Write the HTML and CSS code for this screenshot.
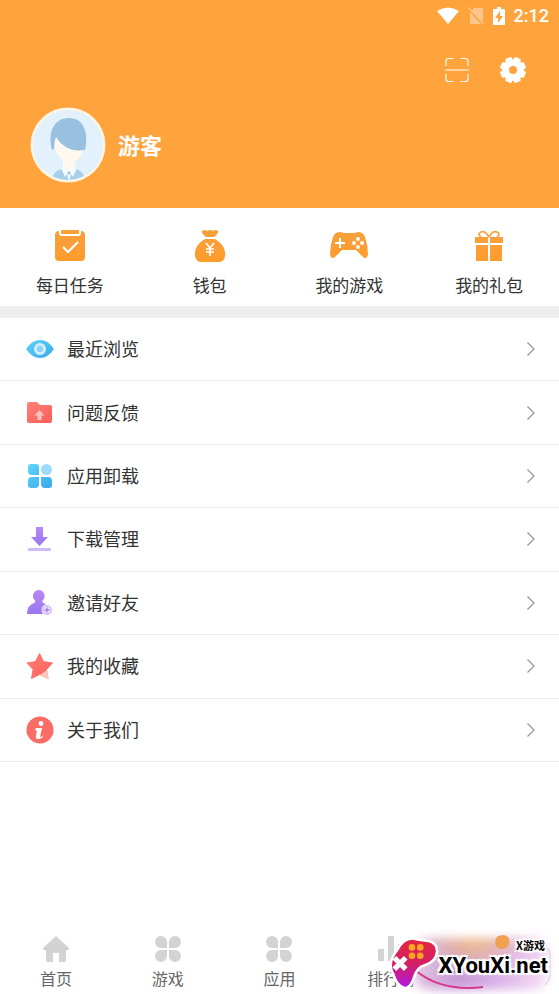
FILE: index.html
```
<!DOCTYPE html>
<html lang="zh-CN">
<head>
<meta charset="utf-8">
<meta name="viewport" content="width=device-width, initial-scale=1">
<title>我的</title>
<link rel="stylesheet" href="styles.css">
</head>
<body>
<svg width="0" height="0" class="defs" aria-hidden="true">
  <defs>
    <linearGradient id="orange" x1="0" y1="0" x2="0" y2="1"><stop offset="0" stop-color="#f7a03c"/><stop offset="1" stop-color="#ff9c2c"/></linearGradient>
    <linearGradient id="blue" x1="0" y1="0" x2="1" y2="1"><stop offset="0" stop-color="#5fd3fb"/><stop offset="1" stop-color="#3aa8ec"/></linearGradient>
    <linearGradient id="red" x1="0" y1="0" x2="1" y2="1"><stop offset="0" stop-color="#ff8078"/><stop offset="1" stop-color="#fa5f58"/></linearGradient>
    <linearGradient id="purple" x1="0" y1="0" x2="0" y2="1"><stop offset="0" stop-color="#b889f6"/><stop offset="1" stop-color="#9a76f1"/></linearGradient>
    <linearGradient id="pad" x1="0" y1="0" x2="0" y2="1"><stop offset="0" stop-color="#e22643"/><stop offset=".5" stop-color="#d51e62"/><stop offset="1" stop-color="#b01ce0"/></linearGradient>
    <clipPath id="face"><circle cx="38" cy="38" r="35"/></clipPath>
    <symbol id="chevron" viewBox="0 0 10 16"><path d="M1.500 1.500 8 8l-6.500 6.500" fill="none" stroke="#999" stroke-width="1.300"/></symbol>
    <symbol id="clover" viewBox="0 0 28 28"><path d="M7 1h0a6 6 0 0 1 6 6v6H7A6 6 0 0 1 7 1ZM21 1h0a6 6 0 0 1 0 12h-6V7a6 6 0 0 1 6-6ZM7 15h6v6a6 6 0 1 1-6-6ZM15 15h6a6 6 0 1 1-6 6Z" fill="#d3d3d3"/></symbol>
  </defs>
</svg>
<div class="app">
  <header class="hero">
    <div class="status">
      <svg width="22" height="18" viewBox="0 0 22 18"><path d="M0 4Q11-3 22 4L11 17Z" fill="#fff"/></svg>
      <svg width="16" height="18" viewBox="0 0 16 18"><path d="M6 1h9v13L4 4ZM2 5l11 12H2ZM0 1l1-1 15 16-1 1Z" fill="#ffc68c"/></svg>
      <svg width="12" height="18" viewBox="0 0 12 18"><path fill-rule="evenodd" d="M4 0h4v2h3q1 0 1 1v14q0 1-1 1H1q-1 0-1-1V3q0-1 1-1h3ZM7 4 2 11h3v5l5-7H7Z" fill="#fff"/></svg>
      <span>2:12</span>
    </div>
    <div class="tools">
      <button type="button" aria-label="扫一扫"><svg width="26" height="26" viewBox="0 0 26 26"><path d="M2 9V4q0-2.500 2.500-2.500h5M16.500 1.500h5q2.500 0 2.500 2.500v5M2 17v5q0 2.500 2.500 2.500h5M16.500 24.500h5q2.500 0 2.500-2.500v-5M1 13h24" fill="none" stroke="#fff" stroke-width="1.200"/></svg></button>
      <button type="button" aria-label="设置"><svg width="28" height="28" viewBox="0 0 28 28">
        <g fill="#fff"><rect x="10.500" y="1" width="7" height="26" rx="1.500" transform="rotate(22.500 14 14)"/><rect x="10.500" y="1" width="7" height="26" rx="1.500" transform="rotate(67.500 14 14)"/><rect x="10.500" y="1" width="7" height="26" rx="1.500" transform="rotate(112.500 14 14)"/><rect x="10.500" y="1" width="7" height="26" rx="1.500" transform="rotate(157.500 14 14)"/><circle cx="14" cy="14" r="10.800"/></g>
        <circle cx="14" cy="14" r="4" fill="#ffa43c"/></svg></button>
    </div>
    <div class="profile">
      <svg width="76" height="76" viewBox="0 0 76 76" role="img" aria-label="头像">
        <circle cx="38" cy="38" r="37.500" fill="#fff5e4"/><circle cx="38" cy="38" r="35" fill="#e2f1fc"/>
        <g clip-path="url(#face)">
          <path d="M22 74q0-9 9-12h15q9 3 9 12Z" fill="#a5cfeb"/>
          <path d="M33 48h12v14l-6 7-6-7Z" fill="#fff8ef"/>
          <path d="M25 28h29v14q-3 8-10 13-5 3-10-1-8-6-9-14Z" fill="#fff8ef"/>
          <path d="M22 43C17 24 25 11 39 11c15 0 20 15 16 32-12 2-22-2-29-13q-2 5-2 12Z" fill="#98c1df"/>
          <path d="m31 61 3-1 5 5 5-5 3 1-4 9-2-3-2 8-2-8-2 3Z" fill="#f5fafd"/>
          <circle cx="39" cy="66" r="1.500" fill="#92bfdd"/>
        </g>
      </svg>
      <h1>游客</h1>
    </div>
  </header>
  <nav class="shortcuts">
    <a href="#"><svg width="40" height="34" viewBox="0 0 40 34"><path d="M9 2v2q0 3 3 3h16q3 0 3-3V2q4 0 4 4v22q0 4-4 4H9q-4 0-4-4V6q0-4 4-4Z" fill="url(#orange)"/><rect x="11" y="1" width="18" height="4" rx="1" fill="url(#orange)"/><path d="m13 18 5 5 10-10" fill="none" stroke="#fff" stroke-width="2.200"/></svg>每日任务</a>
    <a href="#"><svg width="40" height="34" viewBox="0 0 40 34"><path d="M12 2q3-2 5 0 3-2 6 0 3-2 5 0 1 2-4 6h-8q-5-4-4-6ZM15 10h10c7 4 11 10 10 17-.500 4-3 6-7 6H12c-4 0-6-2-7-6-1-7 3-13 10-17Z" fill="url(#orange)"/><path d="m16 14 4 5 4-5M20 19v8M16 20h8M16 23h8" fill="none" stroke="#fff" stroke-width="1.700"/></svg>钱包</a>
    <a href="#"><svg width="40" height="34" viewBox="0 0 40 34"><path d="M4 8q2-5 7-5l4 1h10l4-1q5 0 7 5 3 8 3 17-1 6-5 3l-7-7H13l-7 7q-4 3-5-3 0-9 3-17Z" fill="url(#orange)"/><path d="M11 9v10M6 14h10" stroke="#fff" stroke-width="2"/><g fill="#fff"><circle cx="29" cy="10" r="1.900"/><circle cx="29" cy="18" r="1.900"/><circle cx="25" cy="14" r="1.900"/><circle cx="33" cy="14" r="1.900"/></g></svg>我的游戏</a>
    <a href="#"><svg width="40" height="34" viewBox="0 0 40 34"><path d="M6 8h13v6H6ZM21 8h13v6H21ZM7 16h12v16H7ZM21 16h12v16H21Z" fill="url(#orange)"/><path d="M20 8Q16 1 12 3t0 5M20 8q4-7 8-5t0 5" fill="none" stroke="#f9a243" stroke-width="1.800"/></svg>我的礼包</a>
  </nav>
  <main class="menu">
    <a href="#"><svg width="28" height="28" viewBox="0 0 28 28"><path d="M0 14Q6 5 14 5t14 9q-6 9-14 9T0 14Z" fill="url(#blue)"/><circle cx="14" cy="14" r="6" fill="#d6f0fd"/><circle cx="14" cy="14" r="3.300" fill="#8dd3f8"/></svg><span>最近浏览</span><svg class="arrow"><use href="#chevron"/></svg></a>
    <a href="#"><svg width="28" height="28" viewBox="0 0 28 28"><path d="M1 5q0-2 2-2h8l3 3h10q2 0 2 2v14q0 2-2 2H3q-2 0-2-2Z" fill="url(#red)"/><path d="m13.500 11 5 5.500h-3V21h-4v-4.500h-3Z" fill="#ffc1bb"/></svg><span>问题反馈</span><svg class="arrow"><use href="#chevron"/></svg></a>
    <a href="#"><svg width="28" height="28" viewBox="0 0 28 28"><path d="M5 2h5q3 0 3 3v8H6q-4 0-4-4V5q0-3 3-3ZM6 15h7v7q0 4-4 4H5q-3 0-3-3v-4q0-4 4-4ZM15 15h7q4 0 4 4v4q0 3-3 3h-4q-4 0-4-4Z" fill="url(#blue)"/><circle cx="20.500" cy="7.500" r="5.500" fill="#9ddcfb"/></svg><span>应用卸载</span><svg class="arrow"><use href="#chevron"/></svg></a>
    <a href="#"><svg width="28" height="28" viewBox="0 0 28 28"><path d="M10 2h7v10h5l-8.500 9L5 12h5Z" fill="url(#purple)"/><rect x="2" y="23" width="23" height="3" rx="1" fill="#cfb9f8"/></svg><span>下载管理</span><svg class="arrow"><use href="#chevron"/></svg></a>
    <a href="#"><svg width="28" height="28" viewBox="0 0 28 28"><path d="M12.500 1a6 6 0 0 1 4 10.500v2q5 2 6 7V25H1q0-9 8-11.500v-2A6 6 0 0 1 12.500 1Z" fill="url(#purple)"/><circle cx="21" cy="21" r="5.500" fill="#fff"/><circle cx="21" cy="21" r="4.200" fill="#eee5fe" stroke="#bba1f6"/><path d="M21 18.500v5M18.500 21h5" stroke="#a27df3" stroke-width="1.300"/></svg><span>邀请好友</span><svg class="arrow"><use href="#chevron"/></svg></a>
    <a href="#"><svg width="28" height="28" viewBox="0 0 28 28"><path d="m13.500 1.500 4 8 9 1.500-6 6.500 1.500 9-8.500-4-8 4 1.500-9L1 11l8.500-1.500Z" fill="url(#red)" stroke="#ff756e" stroke-linejoin="round"/><path d="m21 18-7 5 8.500 4.500Z" fill="#ffc7bd"/></svg><span>我的收藏</span><svg class="arrow"><use href="#chevron"/></svg></a>
    <a href="#"><svg width="28" height="28" viewBox="0 0 28 28"><circle cx="14" cy="14" r="13.500" fill="#fc6c66"/><circle cx="15" cy="7.500" r="2.400" fill="#fff"/><path d="M10 12h6l-2 9q2 0 4-2-2 4-6 4-3 0-2-4l1-4-2-1Z" fill="#fff"/></svg><span>关于我们</span><svg class="arrow"><use href="#chevron"/></svg></a>
  </main>
  <footer class="bottom">
    <nav class="tabs">
      <a href="#"><svg width="28" height="28" viewBox="0 0 28 28"><path d="m14 1 13 12q1 2-3 2v10q0 2-2 2h-5v-9h-6v9H6q-2 0-2-2V15q-4 0-3-2Z" fill="#d3d3d3"/></svg>首页</a>
      <a href="#"><svg width="28" height="28"><use href="#clover"/></svg>游戏</a>
      <a href="#"><svg width="28" height="28"><use href="#clover"/></svg>应用</a>
      <a href="#"><svg width="28" height="28" viewBox="0 0 28 28"><path d="M1 14h6v12H1ZM11 1h6v25h-6ZM21 9h6v17h-6Z" fill="#d3d3d3"/></svg>排行榜</a>
      <a href="#" aria-label="我的"><svg width="28" height="28" viewBox="0 0 28 28"><circle cx="14" cy="7" r="7" fill="#ff9c2c"/><path d="M2 27q0-11 12-11t12 11Z" fill="#ff9c2c"/></svg></a>
    </nav>
    <div class="brand">
      <div class="haze"></div>
      <svg class="swoosh" width="172" height="58" viewBox="0 0 172 58"><path d="M28 34q26 22 68 17" fill="none" stroke="#d7368e" stroke-width="2"/><circle cx="115" cy="6" r="7" fill="#f0a04e"/><path d="M157 10q6 2 6 9v20q0 6-5 10" fill="none" stroke="#d9cddd"/></svg>
      <svg class="pad" width="52" height="56" viewBox="0 0 50 54"><path d="M11 14Q17 2 27 4l5 1 8 1q7 2 7 9-1 9-11 12-8 2-11 12-3 10-8 10-7-2-10-13Q1 26 11 14Z" fill="url(#pad)" stroke="#fff" stroke-width="5" paint-order="stroke" stroke-linejoin="round"/><path d="m7 21 11 11M18 21 7 32" stroke="#fff" stroke-width="5"/><g fill="#ffa51f"><circle cx="24" cy="11" r="3.200"/><circle cx="32" cy="11" r="3.200"/><circle cx="24" cy="19" r="3.200"/><circle cx="32" cy="19" r="3.200"/></g></svg>
      <span class="brand-cn">X游戏</span>
      <strong>XYouXi.net</strong>
    </div>
  </footer>
</div>
</body>
</html>
```
FILE: styles.css
```
* { box-sizing: border-box; }
body {
  margin: 0;
  background: #fff;
  color: #333;
  font-family: "Noto Sans CJK SC", sans-serif;
}
a { color: inherit; text-decoration: none; }
svg { display: block; flex: none; }
.defs { position: absolute; }
.app { min-height: 100vh; display: flex; flex-direction: column; }

.hero { background: #ffa43c; padding-bottom: 25px; color: #fff; }
.status {
  display: flex;
  justify-content: flex-end;
  align-items: center;
  gap: 9px;
  height: 32px;
  padding-right: 10px;
  font: 500 18px/32px Roboto, sans-serif;
}
.tools {
  display: flex;
  justify-content: flex-end;
  align-items: center;
  gap: 29px;
  padding: 24px 32px 0 0;
}
.tools button { border: 0; padding: 0; background: none; cursor: pointer; }
.profile { display: flex; align-items: center; gap: 12px; padding: 23px 30px 0; }
.profile h1 { margin: 0; padding-bottom: 2px; font-size: 22px; line-height: 32px; font-weight: 700; }

.shortcuts {
  display: grid;
  grid-template-columns: repeat(4, 1fr);
  padding: 21px 0 9px;
  border-bottom: 12px solid #eee;
}
.shortcuts a {
  display: flex;
  flex-direction: column;
  align-items: center;
  gap: 10px;
  font-size: 17px;
  line-height: 24px;
}

.menu { display: grid; grid-auto-rows: 1fr; min-height: 444px; }
.menu a {
  display: flex;
  align-items: center;
  gap: 13px;
  padding: 0 23px 0 26px;
  border-bottom: 1px solid #ebebeb;
  font-size: 18px;
  line-height: 28px;
}
.menu span { flex: 1; padding-bottom: 2px; }
.menu .arrow { width: 10px; height: 16px; }

.bottom { position: relative; margin-top: auto; }
.tabs { display: grid; grid-template-columns: repeat(5, 1fr); padding-bottom: 4px; }
.tabs a {
  display: flex;
  flex-direction: column;
  align-items: center;
  gap: 3px;
  color: #666;
  font-size: 16px;
  line-height: 24px;
}

.brand {
  position: absolute;
  right: 0;
  bottom: 0;
  width: 172px;
  height: 58px;
  color: #000;
}
.haze, .swoosh, .pad, .brand-cn, .brand strong { position: absolute; }
.haze {
  inset: 2px 10px 4px 26px;
  border-radius: 16px;
  background:
    radial-gradient(ellipse at 45% 0, #f3bf86 0, transparent 50%),
    linear-gradient(100deg, #e8cfe4, #c79bd6 35%, #d6aee6 60%, #fae3f6);
  filter: blur(5px);
}
.swoosh { left: 0; top: 0; }
.pad { left: 0; top: 0; }
.brand-cn {
  right: 14px;
  top: 1px;
  font-size: 11px;
  line-height: 16px;
  font-weight: 700;
}
.brand strong {
  right: 11px;
  top: 17px;
  font: 700 22px/26px Roboto, sans-serif;
}
.brand-cn, .brand strong {
  text-shadow: 1px 0 #fff, -1px 0 #fff, 0 1px #fff, 0 -1px #fff, 2px 2px 1px #fff, -2px -2px 1px #fff, 2px -2px 1px #fff, -2px 2px 1px #fff;
}
```
